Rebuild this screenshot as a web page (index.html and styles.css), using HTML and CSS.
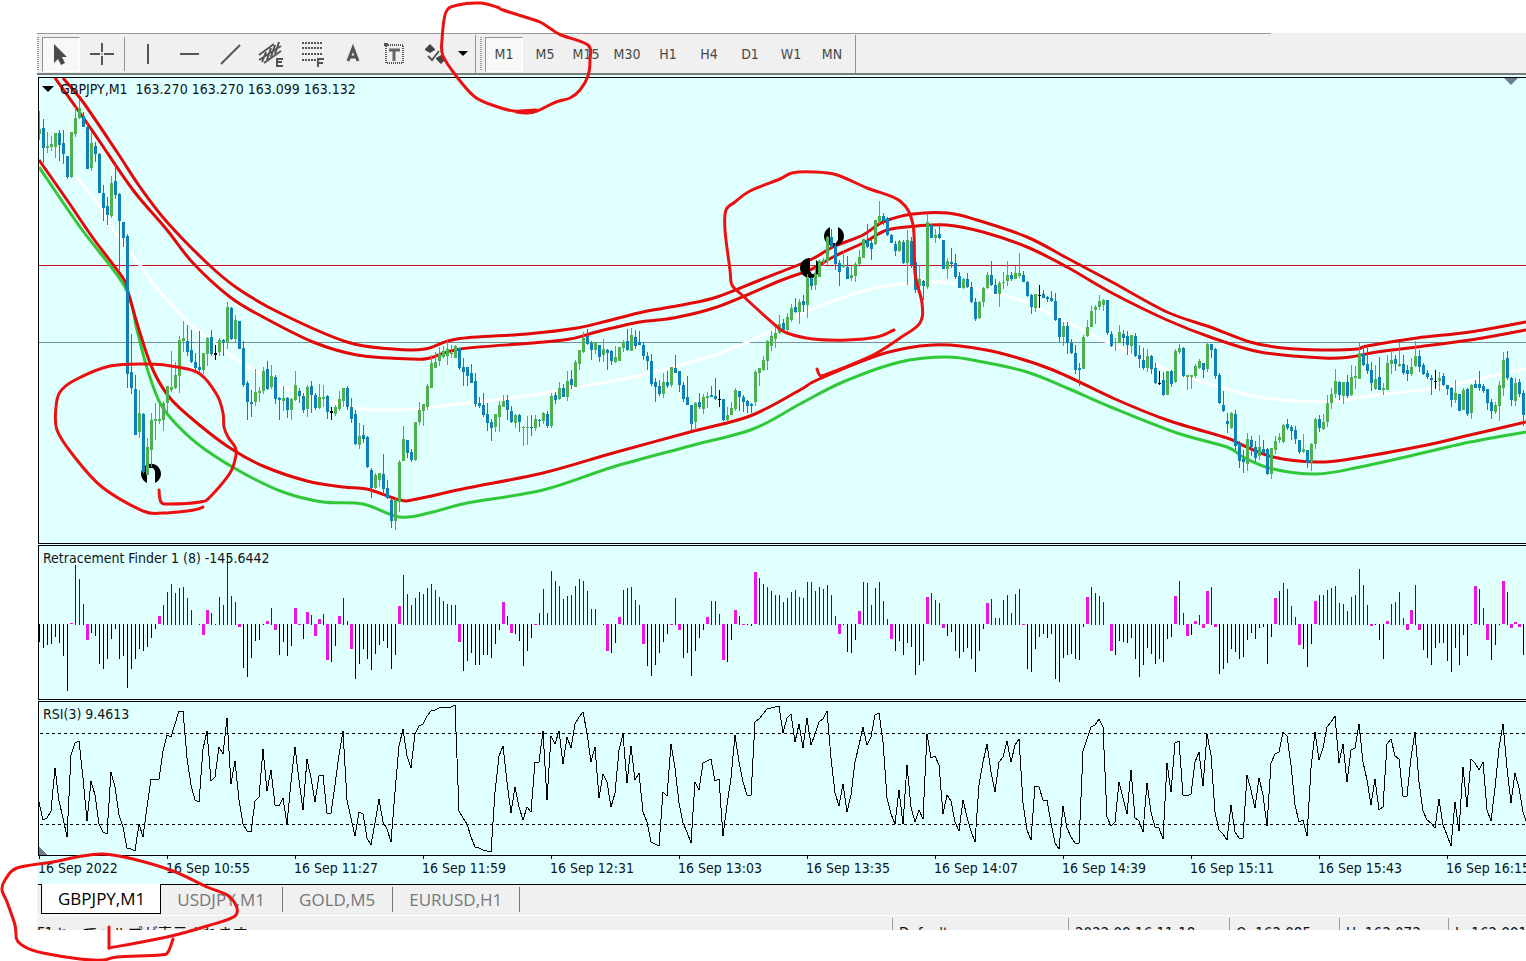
FILE: index.html
```html
<!DOCTYPE html>
<html lang="en">
<head>
<meta charset="utf-8">
<title>GBPJPY,M1</title>
<link rel="stylesheet" href="styles.css">
</head>
<body>
<main class="terminal">
  <div class="toolbar" role="toolbar" aria-label="Charts">
    <span class="grip"></span>
    <button class="tool is-active" aria-label="Cursor"><svg viewBox="0 0 28 28" width="28" height="28"><path d="M7 4v19l4-4 3 6 4-2-3-6h5z" fill="#4a4a4a"/></svg></button>
    <button class="tool" aria-label="Crosshair"><svg viewBox="0 0 28 28" width="28" height="28"><path d="M14 3v9M14 16v9M2 14h10M16 14h10" stroke="#555" stroke-width="2"/><path d="M13 14h2" stroke="#555"/></svg></button>
    <span class="rule"></span>
    <button class="tool" aria-label="Vertical line"><svg viewBox="0 0 28 28" width="28" height="28"><path d="M14 4v20" stroke="#555" stroke-width="2"/></svg></button>
    <button class="tool" aria-label="Horizontal line"><svg viewBox="0 0 28 28" width="28" height="28"><path d="M5 14h19" stroke="#555" stroke-width="2"/></svg></button>
    <button class="tool" aria-label="Trendline"><svg viewBox="0 0 28 28" width="28" height="28"><path d="M5 24L24 5" stroke="#555" stroke-width="2"/></svg></button>
    <button class="tool" aria-label="Equidistant channel"><svg viewBox="0 0 28 28" width="28" height="28"><path d="M2 15L17 4M2 20L24 6M7 23L24 11M5 22l4-10M10 20l4-12M14 17l4-12M18 14l4-12" stroke="#555" stroke-width="2" fill="none"/><path d="M20 18v9M20 19h6M20 22h5M20 26h6" stroke="#555" stroke-width="2"/></svg></button>
    <button class="tool" aria-label="Fibonacci retracement"><svg viewBox="0 0 28 28" width="28" height="28"><path d="M4 3h21M4 8h21M4 14h21M4 20h14" stroke="#555" stroke-width="2" stroke-dasharray="2 1"/><path d="M20 18v9M19 19h7M20 23h5" stroke="#555" stroke-width="2"/></svg></button>
    <button class="tool" aria-label="Text"><svg viewBox="0 0 28 28" width="28" height="28"><path d="M9 21l5-13 5 13M11 17h7" stroke="#555" stroke-width="3" fill="none"/></svg></button>
    <button class="tool" aria-label="Text label"><svg viewBox="0 0 28 28" width="28" height="28"><rect x="6" y="5" width="17" height="18" fill="none" stroke="#555" stroke-width="2" stroke-dasharray="1 1"/><path d="M4 3h4v3h-4z" fill="#555"/><path d="M9 10h11M14 9v12" stroke="#666" stroke-width="3"/></svg></button>
    <button class="tool" aria-label="Arrows"><svg viewBox="0 0 28 28" width="28" height="28"><path d="M9 4l5 5v1l-5 3-5-3v-1zM20 24l-5-5v-1l5-3 5 3v1z" fill="#444"/><path d="M7 16l4 4 7-9" stroke="#555" stroke-width="2" fill="none"/></svg></button>
    <button class="drop" aria-label="More arrows"><svg viewBox="0 0 10 6" width="10" height="6"><path d="M0 0h10l-5 5z"/></svg></button>
    <span class="rule rule-tall"></span>
    <span class="grip"></span>
    <button class="tool is-active">M1</button>
    <button class="tool">M5</button>
    <button class="tool">M15</button>
    <button class="tool">M30</button>
    <button class="tool">H1</button>
    <button class="tool">H4</button>
    <button class="tool">D1</button>
    <button class="tool">W1</button>
    <button class="tool">MN</button>
    <span class="rule rule-tall"></span>
  </div>

  <div class="charts">
    <section class="pane pane-price">
      <svg class="plot"><g transform="translate(-39 -78)">
        <path d="M39 265h3000v1H39z" fill="#cc1020"/>
        <path d="M39 342h3000v1H39z" fill="#6f9498"/>
        <g id="bands" class="bands"></g>
        <g class="signals">
          <path d="M147 483a10 10 0 1 1 8 0v-12l-2-3h-4l-2 3z"/>
          <path d="M810 258a10 10 0 1 0 6 2v11l-2 3h-2l-2-3z"/>
          <path d="M830 227a10 10 0 1 0 8 0v13l-2 3h-3l-3-3z"/>
        </g>
        <g id="candles" class="candles"></g>
        <path d="M1504 78h14l-7 7z" fill="#6a7f92"/>
      </g></svg>
      <h1 class="caption"><svg viewBox="0 0 12 7" width="12" height="7"><path d="M0 0h12l-6 6z"/></svg><span>GBPJPY,M1</span><span>163.270 163.270 163.099 163.132</span></h1>
    </section>
    <section class="pane">
      <svg class="plot"><g id="histogram" class="histogram" transform="translate(-39 -546)"></g></svg>
      <h2 class="caption">Retracement Finder 1 (8) -145.6442</h2>
    </section>
    <section class="pane">
      <svg class="plot"><g transform="translate(-39 -702)" class="rsi">
        <path d="M40 733.500H4000M40 824.500H4000" stroke-dasharray="3 3"/>
        <polyline id="rsi"/>
        <path d="M39 847v8h8z" class="corner"/>
      </g></svg>
      <h2 class="caption">RSI(3) 9.4613</h2>
    </section>
    <div class="axis">
      <span>16 Sep 2022</span><span>16 Sep 10:55</span><span>16 Sep 11:27</span><span>16 Sep 11:59</span><span>16 Sep 12:31</span><span>16 Sep 13:03</span><span>16 Sep 13:35</span><span>16 Sep 14:07</span><span>16 Sep 14:39</span><span>16 Sep 15:11</span><span>16 Sep 15:43</span><span>16 Sep 16:15</span>
    </div>
  </div>

  <nav class="tabs" aria-label="Open charts">
    <button class="tab is-open">GBPJPY,M1</button>
    <button class="tab">USDJPY,M1</button>
    <button class="tab">GOLD,M5</button>
    <button class="tab">EURUSD,H1</button>
  </nav>
  <footer class="status">
    <span class="help" lang="ja">F1キーでヘルプが表示されます</span>
    <span class="cell cell-profile">Default</span>
    <span class="cell cell-time">2022.09.16 11:18</span>
    <span class="cell cell-open">O: 163.085</span>
    <span class="cell cell-high">H: 163.073</span>
    <span class="cell cell-low">L: 162.991</span>
  </footer>
</main>
<svg class="pen" id="pen" aria-hidden="true"></svg>
<script src="charts.js"></script>
</body>
</html>
```
FILE: styles.css
```css
* { box-sizing: border-box; }
body {
  margin: 0;
  background: #fff;
  color: #101418;
  font: 14px/18px "DejaVu Sans Condensed", "Noto Sans", sans-serif;
  overflow: hidden;
  min-height: 100vh;
}
button { font: inherit; color: inherit; border: 0; background: none; padding: 0; margin: 0; }
svg { display: block; }
.terminal { padding: 33px 0 0 37px; overflow: hidden; }

.toolbar {
  display: flex;
  align-items: center;
  gap: 3px;
  height: 42px;
  padding-top: 2px;
  background: linear-gradient(#999, #999) 0 0 / 1234px 1px no-repeat, #f0f0f0;
  border-bottom: 2px solid #767b7c;
  color: #484848;
}
.tool { flex: none; display: flex; align-items: center; justify-content: center; width: 38px; height: 35px; white-space: nowrap; border: 1px solid transparent; }
.tool.is-active { background: #f8f8f8; border-color: #909090 #fff #fff #909090; }
.grip { flex: none; width: 2px; height: 34px; background: repeating-linear-gradient(#999 0 1px, #f0f0f0 1px 2px); }
.rule { flex: none; width: 1px; height: 34px; margin-right: 1px; background: #909090; }
.rule-tall { height: 38px; margin-left: 1px; }
.drop { flex: none; display: flex; justify-content: center; width: 17px; margin-left: -3px; }

.charts { padding: 2px 0 0 1px; background: linear-gradient(#fff, #fff) 0 0 / 1px 100% no-repeat, #e0ffff; }
.pane { position: relative; height: 155px; margin-bottom: 1px; border: 1px solid #000; border-right: 0; background: #e0ffff; overflow: hidden; }
.pane-price { height: 467px; }
.pane:nth-of-type(3) { margin-bottom: 0; }
.plot { width: 100%; height: 100%; }
.caption { position: absolute; top: 3px; left: 4px; margin: 0; display: flex; align-items: center; gap: 8px; font-size: 14px; line-height: 18px; font-weight: 400; white-space: pre; }
.pane-price .caption { left: 3px; top: 2px; }
.caption svg { margin-right: -2px; }

.bands { fill: none; stroke: #e20808; stroke-width: 3; }
.bands .lower { stroke: #30c838; }
.bands .middle { stroke: #fff; }
.candles, .histogram, .rsi { shape-rendering: crispEdges; }
.rise { fill: #50b050; }
.fall { fill: #1080b8; }
.flat { fill: #000; }
.turn { fill: #e814e8; }
.over { fill: #10207c; }
.rsi { fill: none; stroke: #000; }
.rsi .corner { fill: #6a7f92; stroke: none; }

.axis { display: flex; height: 29px; border-bottom: 1px solid #000; overflow: hidden; }
.axis span { flex: none; width: 128px; padding-top: 3px; background: linear-gradient(#000, #000) 1px 0 / 1px 3px no-repeat; white-space: nowrap; }

.tabs { display: flex; height: 31px; padding-left: 4px; background: #f0f0f0; border-bottom: 1px solid #fff; color: #777; font: 17px/28px "Open Sans", "Noto Sans", sans-serif; }
.tab { position: relative; height: 25px; margin-top: 2px; padding: 0 17px 0 16px; border-right: 1px solid #777; line-height: 25px; }
.tab.is-open { z-index: 1; height: 30px; margin-top: -1px; padding-right: 15px; background: #fff; border: 1px solid #000; border-top: 0; color: #000; }

.status { display: flex; height: 14px; padding-top: 2px; overflow: hidden; background: #f0f0f0; color: #111; font: 15px/20px "DejaVu Sans Condensed", "Noto Sans CJK JP", sans-serif; white-space: nowrap; }
.status > * { height: 30px; padding-top: 6px; }
.help { flex: 1; }
.cell { flex: none; padding-left: 6px; border-left: 1px solid #999; }
.cell-profile { width: 176px; }
.cell-time { width: 161px; }
.cell-open { width: 110px; }
.cell-high { width: 109px; }
.cell-low { width: 78px; }

.pen { position: absolute; inset: 0; width: 100%; height: 100%; pointer-events: none; fill: none; stroke: #ec1010; stroke-width: 3; stroke-linecap: round; stroke-linejoin: round; }
```
FILE: charts.js
```js
const NS = "http://www.w3.org/2000/svg";
const LEFT = 39, STEP = 4;

function add(parent, tag, attrs) {
  const el = document.createElementNS(NS, tag);
  for (const k in attrs) el.setAttribute(k, attrs[k]);
  parent.appendChild(el);
}

/* Smooth path through a list of "x,y" points. */
function smooth(text) {
  const p = text.trim().split(/\s+/).map(s => s.split(",").map(Number));
  let d = "M" + p[0];
  for (let i = 0; i < p.length - 1; i++) {
    const a = p[i - 1] || p[i], b = p[i], c = p[i + 1], e = p[i + 2] || c;
    d += "C" + [b[0] + (c[0] - a[0]) / 6, b[1] + (c[1] - a[1]) / 6, c[0] - (e[0] - b[0]) / 6, c[1] - (e[1] - b[1]) / 6, c[0], c[1]];
  }
  return d;
}

const bands = [
  ["middle", "75,175 97,203 117,235 140,265 155,286 183,317 197,330 230,355 257,372 290,390 357,408 393,410 417,409 467,403 533,395 583,386 633,377 683,364 723,352 773,330 810,310 867,290 900,284 943,282 967,287 1020,300 1067,322 1103,340 1160,367 1203,382 1253,396 1297,401 1337,401 1377,395 1443,387 1487,377 1526,369"],
  ["lower", "39,167 80,227 125,287 137,330 147,368 160,403 177,425 203,448 243,473 283,492 323,502 363,504 400,517 433,512 467,503 543,490 613,467 690,446 753,429 800,404 843,382 900,362 947,357 983,362 1027,372 1067,388 1113,408 1177,433 1227,447 1243,457 1273,469 1317,474 1360,467 1427,452 1470,442 1526,432"],
  ["upper", "63,78 83,102 117,152 140,187 167,222 207,263 237,288 280,313 347,342 393,349 425,349 457,339 527,334 577,328 607,321 643,312 687,304 717,297 760,280 810,260 833,247 863,235 883,222 913,214 948,213 977,220 1027,237 1067,258 1112,282 1167,312 1210,327 1250,342 1283,348 1323,350 1357,349 1367,346 1417,338 1470,332 1526,322"],
  ["upper", "55,78 80,113 100,142 133,190 167,230 193,263 230,297 263,317 313,342 357,355 410,359 430,358 460,349 533,343 570,339 600,331 640,322 673,318 717,307 782,280 810,270 833,257 863,243 887,230 917,226 947,225 983,232 1027,247 1067,267 1112,293 1167,320 1210,337 1260,352 1323,358 1350,357 1377,352 1417,347 1470,340 1526,330"],
  ["upper", "39,160 67,200 93,238 123,278 128,292 140,333 153,370 170,398 197,423 230,448 263,466 307,481 343,487 367,489 400,500 417,499 467,488 543,473 613,453 690,432 750,416 800,390 817,380 873,357 907,348 933,345 960,346 1000,353 1053,370 1115,399 1167,420 1227,438 1240,444 1273,457 1317,462 1350,459 1427,445 1470,435 1526,422"]
];
const bandLayer = document.getElementById("bands");
for (const [name, points] of bands) add(bandLayer, "path", { class: name, d: smooth(points) });

/* direction, high, body top, body bottom, low */
const candles = `g111,129,134,140 b119,128,148,163 g132,146,148,153 g136,144,147,151 g133,133,147,158 b130,133,145,161 b130,143,154,164 b156,156,177,179 g132,132,177,178 g107,118,134,137
g100,108,118,119 b112,116,127,127 b122,127,169,169 g132,143,168,171 b142,146,154,162 b153,154,193,193 b185,193,208,221 b197,206,215,225 g176,183,216,218 b162,181,195,199
b193,194,221,270 b222,222,238,247 b234,236,374,388 b334,372,388,394 b375,389,435,435 g390,413,432,438 b413,414,472,474 g438,447,475,475 g413,420,450,467 g403,419,421,440
g400,419,421,424 g401,403,420,431 g386,386,403,415 g351,387,390,392 g362,375,388,389 g336,340,376,393 g321,338,341,352 b325,341,352,356 b330,350,362,363 b353,362,368,372
b331,367,370,372 g353,353,370,374 g337,338,354,366 b330,337,354,356 k345,353,355,360 g338,340,352,356 b339,340,342,356 g302,307,343,349 b307,308,339,340 g315,320,339,343
b321,321,349,349 b341,348,385,387 b381,383,402,420 b390,402,404,417 g369,392,402,406 g387,391,393,402 g367,371,391,394 b361,369,389,390 g365,376,387,389 b375,377,399,404
b397,398,400,420 g386,398,401,411 b397,398,410,418 g398,399,410,420 g371,385,400,401 b388,391,396,403 b393,396,410,413 g385,387,409,417 b381,386,395,413 b393,395,408,410
g384,397,408,409 g385,397,399,407 b395,396,412,419 k407,411,413,420 g405,407,414,416 g391,399,409,411 g388,388,401,407 b386,388,407,410 b398,407,419,423 b410,414,444,445
g423,436,445,449 b425,435,439,443 b436,437,467,468 b468,470,488,498 g473,475,488,489 g473,473,480,487 b454,474,489,495 b480,488,498,499 b498,500,521,528 g498,500,521,530
g460,462,502,512 g426,439,461,461 b440,440,453,458 b449,452,460,462 g422,422,460,461 g402,410,422,425 g404,404,411,426 g384,386,407,410 g355,363,388,388 g352,362,368,368
g347,354,361,366 g346,351,357,358 g340,349,356,365 g345,353,354,358 g345,346,358,358 b348,348,368,370 b358,367,372,386 b367,367,376,386 b364,373,383,383 b373,381,404,407
b397,403,406,408 b393,405,415,417 b403,414,423,431 b419,422,428,441 g414,414,427,432 g401,405,417,432 g395,401,407,407 b395,400,410,420 b406,411,422,423 g414,415,423,428
b414,415,422,432 g426,427,428,446 g416,427,428,445 b415,427,428,436 g415,419,428,431 b419,420,421,427 g412,413,421,424 b411,414,426,428 g393,396,426,428 b392,395,400,404
g382,388,399,400 b384,388,397,397 g371,381,397,401 b370,379,385,389 g360,362,387,387 g350,350,364,370 g332,338,352,353 b329,336,344,345 b341,343,350,360 g342,342,350,354
b345,345,357,362 g339,349,355,362 b349,350,353,370 b350,351,361,365 g346,357,362,363 g347,347,361,361 g340,342,348,352 b329,341,350,351 g328,335,351,351 b330,337,346,349
b331,342,345,345 b342,345,356,360 b352,356,361,370 b354,361,384,386 b378,382,387,402 b380,386,394,396 g373,382,394,398 b371,382,386,388 g367,367,385,387 b355,368,373,373
b371,371,385,392 b382,385,399,402 b376,397,405,405 b405,405,424,431 g402,403,422,430 b393,402,407,409 g394,397,409,414 g392,396,398,408 b386,395,397,397 b378,396,399,400
k390,399,400,407 b399,399,420,421 g407,415,420,422 g402,408,415,415 g388,390,409,411 b391,391,397,411 b395,397,402,412 b400,401,406,413 b403,404,406,413 g370,372,402,406
g368,368,373,386 g356,360,370,371 g340,341,361,370 g331,336,346,351 g325,333,339,348 g315,324,333,334 b319,323,330,332 g313,317,330,331 g304,308,320,322 b298,307,312,313
g299,302,312,324 b295,301,305,312 g274,277,305,318 b277,278,286,290 g268,274,285,290 g260,261,277,277 g258,260,262,266 g236,237,261,265 b229,237,247,248 b243,246,264,270
b260,263,272,286 g250,265,267,268 b256,267,279,279 g266,275,278,281 g262,264,276,282 g250,257,264,265 g239,239,258,258 b224,240,247,248 b240,243,249,260 g220,220,244,245
g201,216,222,224 b213,216,221,225 b217,218,235,236 b234,235,243,243 b241,244,251,256 g240,241,251,252 b240,242,263,264 g230,240,263,285 b237,241,265,268 b258,262,290,293
g265,279,286,288 b280,281,286,300 g214,222,287,289 b224,225,238,238 g229,235,238,243 b223,234,238,239 b240,240,269,269 g258,261,269,279 b248,262,264,268 b254,263,277,279
b272,276,288,288 g278,279,288,289 b273,279,287,288 b282,287,302,303 b298,302,319,321 g301,302,318,319 g287,288,302,307 g272,275,288,289 b261,275,285,286 b279,285,294,294
g281,283,294,307 g272,282,283,289 g261,275,281,286 b272,275,279,281 g266,273,279,279 g253,273,276,278 b271,275,282,282 b281,282,296,297 b294,295,307,314 g294,294,308,312
k285,295,296,308 b290,294,298,298 b296,297,299,302 b291,298,301,302 b293,301,320,321 b318,318,337,342 g322,326,337,346 b322,326,343,354 b339,343,353,354 b345,353,370,374
b363,368,370,386 g335,337,369,369 g320,327,336,337 g306,311,327,327 g305,307,310,324 g295,301,307,310 g299,300,305,311 b300,300,333,335 b331,334,346,347 g338,342,343,351
g325,332,343,343 b330,334,338,346 b331,336,345,355 g335,335,346,354 b333,336,356,357 b345,355,359,368 b348,360,368,370 g349,356,368,372 b355,356,369,374 b363,368,383,384
k371,383,384,385 b372,380,395,396 g371,371,395,395 b370,371,384,387 g349,351,382,383 g344,348,352,354 b347,348,376,377 g375,375,377,390 g375,375,377,389 g364,366,376,378
g359,361,368,369 b363,363,370,378 g342,344,369,372 b344,344,350,358 b348,349,376,379 b373,375,403,404 b391,405,411,412 b413,421,424,433 g412,413,428,429 b410,414,446,450
b441,443,461,468 b450,459,462,473 g433,439,464,471 b436,440,447,456 b441,447,458,462 g435,447,456,460 b440,449,453,454 b448,449,474,475 g448,448,474,479 g436,441,450,454
g433,437,440,443 g424,425,442,443 b419,424,428,430 b425,427,431,440 b426,430,439,444 b440,440,452,454 g434,449,452,453 b450,450,463,468 g443,444,462,471 g418,419,444,449
b415,419,428,432 g414,422,429,430 g395,403,422,427 g388,394,403,409 g369,381,394,398 b381,382,395,400 g382,382,396,404 b375,382,396,398 g365,377,395,396 g366,376,378,389
g343,353,379,379 b346,354,365,366 b346,364,371,374 b362,370,383,391 g365,379,389,390 b357,377,390,390 g383,388,390,395 g355,363,390,390 g352,360,364,374 b355,359,364,371
g343,364,366,367 b355,364,373,375 b365,370,374,381 g358,367,374,376 g341,356,366,367 b350,356,367,372 b363,365,374,375 b370,373,377,379 b375,378,380,395 k370,381,382,389
g372,378,381,391 b373,376,385,386 b385,385,389,395 b387,388,400,407 g380,393,400,403 b394,394,411,411 g388,390,410,410 b388,389,414,416 g384,385,413,419 b380,384,388,388
b371,384,388,391 b384,386,391,393 b389,389,403,410 b399,402,411,419 g402,405,412,414 g381,385,406,421 g352,360,388,396 b351,358,378,380 b377,378,400,406 g378,383,401,406
b379,382,394,397 b390,393,415,426`.split(/\s+/);

const kinds = { g: "rise", b: "fall", k: "flat" };
const candleLayer = document.getElementById("candles");
candles.forEach((c, i) => {
  const [high, top, bottom, low] = c.slice(1).split(",").map(Number);
  const x = LEFT + STEP * i, cls = kinds[c[0]];
  add(candleLayer, "rect", { class: cls, x, y: high, width: 1, height: low - high });
  add(candleLayer, "rect", { class: cls, x: x - 1, y: top, width: 3, height: Math.max(1, bottom - top) });
});

/* Bar heights round the zero line; m marks a change of direction. */
const bars = `-18 -24 -21 -20 -13 -19 -32 -67 m1 59 45 20 m-16 -9 -12 -40 -45 -35 -15 -5 -35 -32 -64 -45 -35 -25 -27 -23 -14 -5
m8 19 32 40 31 36 37 26 14 . 0 m-11 m14 11 0 27 19 71 28 22 m-3 -44 -53 -34 -17 -16 -1 m3 16 m-6
-31 -18 -32 -22 m16 m-1 -15 m12 9 m-12 m5 10 m-36 -38 -22 m8 26 3 m-25 -55 -40 -25 -35 -46 -30 -21 -17 -24 -45 -31
m18 49 30 19 26 32 30 36 40 34 27 23 20 19 19 m-18 -47 -37 -29 -41 -41 -31 -31 -34 -20 -6 m22 8 m-9 -10
-17 -42 -27 -14 m-1 11 35 11 53 43 38 25 28 29 38 45 43 33 15 15 . 0 m-27 -29 -19 m7 34 36 37 24
19 m-20 -42 -52 -41 -29 -18 -10 m-1 26 m-6 -34 -29 -52 -27 -14 -6 m7 23 23 10 m-36 -38 -16 m14 8 m-1 -1 -2 m52
46 40 37 33 29 29 22 26 32 34 27 26 42 42 33 37 35 39 29 8 m-10 0 -28 -29 -16 m13 42 41 19 36
42 23 5 m-15 -27 -17 -31 -19 -23 -51 -41 -37 m27 31 24 21 m-4 -12 -8 -27 -34 -28 -24 -35 -48 -27 -5 m21 25 6
6 24 29 11 30 35 m-1 -45 -48 -25 -13 -10 -14 -10 -55 -58 -34 -31 -30 -35 -36 -3 m27 37 31 28 22 . m-27 -31
-17 -18 -19 -14 -35 -53 -41 -24 -30 -40 -35 -38 -15 -13 m28 43 11 m-12 -11 m3 9 m-4 m33 37 m-3 -50 -45 -39 -25 -28
-35 -33 -16 -9 -15 -4 -3 -40 -13 m26 33 41 35 18 7 m-21 -25 -43 -20 m23 29 29 34 36 38 21 20 13 27 29
55 39 19 m-2 -1 -16 -35 m3 20 22 32 6 m-6 m14 39 m-6 -26 -34 -41 -24 -19 -19 -37 -48 -24 -41 -11 -32 -1 m38
35 16 m-16 -36 -21 -1 m43 32 m-4 m2 m-3 -31`.split(/\s+/);

const barLayer = document.getElementById("histogram");
bars.forEach((b, i) => {
  if (b === ".") return;
  const turn = b[0] === "m", v = Number(b.replace("m", "")), x = LEFT + STEP * i;
  add(barLayer, "rect", {
    class: turn ? "turn" : v < 0 ? "flat" : "over",
    x: turn ? x - 1 : x,
    y: v < 0 ? 624 : 624 - v,
    width: turn ? 3 : 1,
    height: Math.abs(v) + (turn || v < 0 ? 0 : 1)
  });
});

const rsi = `257 275 273 266 223 256 273 292 210 198 196 233 276 236 250 279 287 289 227 242 270 282 303 304 306 279 292 262 234 234
234 206 190 192 179 166 166 213 240 255 257 204 186 236 232 202 209 173 239 216 255 279 286 287 256 252 204 246 225 260
261 253 279 237 202 235 265 214 233 257 231 230 268 268 240 210 186 255 273 291 267 269 293 300 278 254 277 284 297 247
201 184 211 223 189 181 179 171 166 165 163 162 162 162 160 266 273 279 292 302 303 305 306 307 247 211 201 237 268 242
262 275 262 267 217 217 186 255 191 199 186 219 192 203 179 172 167 188 217 202 253 229 237 262 248 205 189 238 201 235
228 267 277 297 299 301 247 251 199 223 258 278 287 298 237 245 218 216 214 236 234 291 260 233 190 217 237 250 250 177
174 169 164 163 162 161 188 173 169 197 179 203 173 200 189 177 174 166 213 248 261 239 267 250 217 200 182 200 192 170
168 197 253 269 279 245 279 220 262 277 265 274 189 213 211 220 269 250 256 277 286 255 272 286 297 240 217 199 227 247
217 212 196 217 200 194 258 285 295 241 242 255 255 278 298 304 261 283 292 298 298 206 194 182 180 174 182 272 281 277
237 253 269 225 273 276 287 238 267 282 283 294 218 247 198 196 250 251 249 217 207 241 189 210 267 285 289 295 260 287
293 293 230 245 263 233 250 281 218 209 207 187 191 220 260 277 275 291 223 187 215 203 182 177 171 218 199 237 205 203
179 217 235 260 234 265 262 199 194 211 214 251 251 213 187 237 266 275 278 283 254 280 290 301 257 286 222 262 214 218
225 217 265 276 243 203 179 223 258 228 243 267 279`.split(/\s+/);
document.getElementById("rsi").setAttribute("points", rsi.map((v, i) => (LEFT + STEP * i) + "," + (545 + Number(v))).join(" "));

const strokes = [
  "536,110 514,111 495,106 475,97 457,77 443,56 442,40 446,12 458,5 480,3 497,7 503,10 525,17 540,22 551,29 561,35 588,45 590,60 588,76 580,90 570,98 556,102 537,111 526,113 516,112",
  "203,507 198,509 187,511 163,513 143,511 102,487 73,455 57,430 56,407 60,392 75,380 110,366 150,364 177,367 200,374 217,395 223,413 224,427 228,437 235,447 236,455 230,473 210,497 200,502 170,504 161,502 159,490",
  "894,330 877,337 847,340 813,339 787,333 775,325 743,296 732,285 730,270 725,230 726,210 735,202 750,191 780,179 792,173 813,172 837,175 867,188 900,201 913,225 915,273 922,303 920,323 900,338 873,355 833,372 822,376",
  "817,369 821,376 833,372",
  "173,939 168,952 160,955 117,957 103,960 80,959 43,953 27,948 17,940 15,925 7,902 2,890 5,880 17,868 53,862 77,857 103,854 133,859 173,871 207,887 230,897 236,915 207,926 167,937 109,948",
  "109,948 109,927"
];
const pen = document.getElementById("pen");
for (const s of strokes) add(pen, "path", { d: smooth(s) });
```
